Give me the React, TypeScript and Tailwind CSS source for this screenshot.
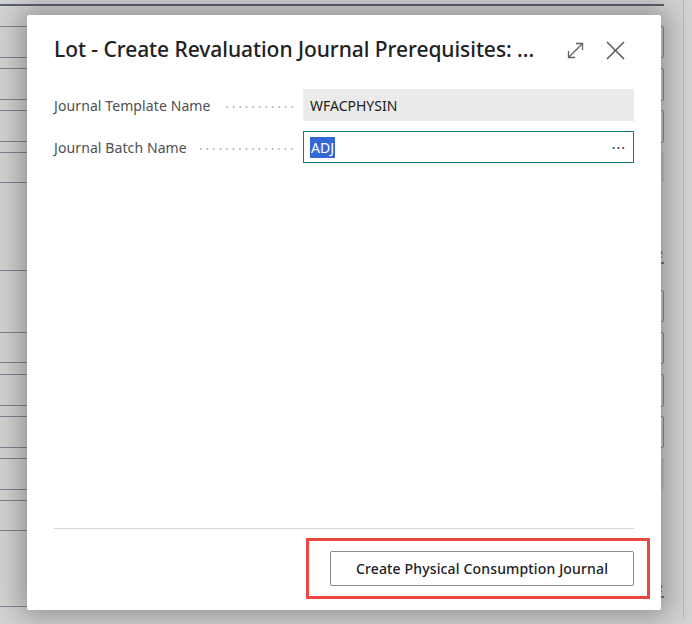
import React from 'react';

const leftRows = [
  { mt: 'mt-[26px]', h: 'h-[32px]' },
  { mt: 'mt-[10px]', h: 'h-[32px]' },
  { mt: 'mt-[10px]', h: 'h-[32px]' },
  { mt: 'mt-[10px]', h: 'h-[31px]' },
];

const FieldRow: React.FC<{ label: string; children: React.ReactNode }> = ({ label, children }) => (
  <div className="flex items-center h-[32px]">
    <div className="flex items-center w-[249px] pr-[8px]">
      <span className="text-[14px] text-[#505050] whitespace-nowrap tracking-[0.1px]">{label}</span>
      <div className="flex-1 ml-[12px] h-[2px] mt-[3px] bg-[radial-gradient(circle,#a8a8a8_0.9px,transparent_1.1px)] bg-size-[6.5px_2px] bg-repeat-x bg-right" />
    </div>
    {children}
  </div>
);

export default function App() {
  return (
    <div className="relative w-[692px] h-[624px] overflow-hidden bg-[#d3d3d3] font-['Segoe_UI','Noto_Sans',sans-serif]">
      {/* page behind the dialog */}
      <div className="h-[4px]" />
      <div className="h-[2px] w-[664px] bg-[#5b6270]" />
      <div className="flex w-[684px] border-r border-[#b9b9b9] h-[618px] -mt-[6px]">
        <div className="w-[345px] flex flex-col">
          {leftRows.map((r, i) => (
            <div key={i} className={`${r.mt} ${r.h} border-y border-[#7e8594]`} />
          ))}
          <div className="mt-[87px] border-b border-[#7e8594]" />
          <div className="mt-[61px] h-[31px] border-y border-[#7e8594]" />
          <div className="mt-[11px] h-[32px] border-y border-[#7e8594]" />
          <div className="mt-[10px] h-[32px] border-y border-[#7e8594]" />
          <div className="mt-[10px] h-[32px] border-y border-[#7e8594]" />
          <div className="mt-[10px] h-[31px] border-y border-[#7e8594]" />
          <div className="mt-[75px] border-b border-[#7e8594]" />
        </div>
        <div className="w-[319px] flex flex-col">
          <div className="mt-[26px] h-[32px] border border-[#8d8d8d] rounded-[2px]" />
          <div className="mt-[10px] h-[33px] border border-[#8d8d8d] rounded-[2px]" />
          <div className="mt-[9px] h-[33px] border border-[#8d8d8d] rounded-[2px]" />
          <div className="mt-[9px] h-[30px] bg-[#c4c4c4]" />
          <div className="mt-[62px] h-[18px] text-right text-[14px] leading-[18px] text-[#6d6d6d] pr-[1px]">e</div>
          <div className="flex justify-end"><div className="w-[4px] border-b-2 border-[#6e737c]" /></div>
          <div className="mt-[26px] h-[32px] border border-[#8d8d8d] rounded-[2px]" />
          <div className="mt-[10px] h-[32px] border border-[#8d8d8d] rounded-[2px]" />
          <div className="mt-[10px] h-[33px] border border-[#8d8d8d] rounded-[2px]" />
          <div className="mt-[9px] h-[32px] border border-[#8d8d8d] rounded-[2px]" />
          <div className="mt-[10px] h-[31px] bg-[#c4c4c4]" />
          <div className="mt-[89px] h-[18px] text-right text-[14px] leading-[18px] text-[#6d6d6d] pr-[1px]">e</div>
          <div className="flex justify-end"><div className="w-[4px] border-b-2 border-[#6e737c]" /></div>
        </div>
      </div>

      {/* dialog */}
      <div className="absolute left-[27px] top-[15px] w-[634px] h-[595px] bg-white rounded-[2px] shadow-[0_0_28px_6px_rgba(0,0,0,0.32)] flex flex-col px-[27px]">
        <div className="flex items-center h-[28px] mt-[21px]">
          <h1 className="flex-1 text-[21px] font-medium text-[#212121] whitespace-nowrap tracking-[-0.05px]">
            Lot - Create Revaluation Journal Prerequisites: ...
          </h1>
          <button className="w-[20px] h-[20px] flex items-center justify-center mr-[20px]">
            <svg width="17" height="17" viewBox="0 0 17 17" fill="none" stroke="#616161" strokeWidth="1.3">
              <path d="M1.5 15.5 L15.5 1.5" />
              <path d="M9 1.5 H15.5 V8" />
              <path d="M1.5 9 V15.5 H8" />
            </svg>
          </button>
          <button className="w-[20px] h-[20px] flex items-center justify-center mr-[9px]">
            <svg width="19" height="19" viewBox="0 0 19 19" fill="none" stroke="#5a5a5a" strokeWidth="1.6">
              <path d="M1 1 L18 18" />
              <path d="M18 1 L1 18" />
            </svg>
          </button>
        </div>

        <div className="mt-[25px] flex flex-col gap-[10px]">
          <FieldRow label="Journal Template Name">
            <div className="flex-1 h-[32px] bg-[#ebebeb] flex items-center pl-[7px] text-[14px] text-[#212121]">
              WFACPHYSIN
            </div>
          </FieldRow>
          <FieldRow label="Journal Batch Name">
            <div className="flex-1 h-[32px] border border-[#117a7a] flex items-center pl-[6px] pr-[7px] text-[14px] text-[#212121]">
              <span className="bg-[#3367d6] text-white leading-[21px] px-[1px]">ADJ</span>
              <span className="ml-auto text-[14px] tracking-[1px] text-[#333]">···</span>
            </div>
          </FieldRow>
        </div>

        <div className="flex-1" />
        <div className="border-t border-[#d6d6d6]" />
        <div className="flex justify-end mt-[9px] mb-[11px] -mr-[16px]">
          <div className="border-[3px] border-[#e8463e] pt-[10px] pb-[10px] pl-[21px] pr-[13px]">
            <button className="w-[304px] h-[35px] border border-[#8a8a8a] rounded-[2px] bg-white text-[14px] font-medium text-[#212121] tracking-[0.15px]">
              Create Physical Consumption Journal
            </button>
          </div>
        </div>
      </div>
    </div>
  );
}
